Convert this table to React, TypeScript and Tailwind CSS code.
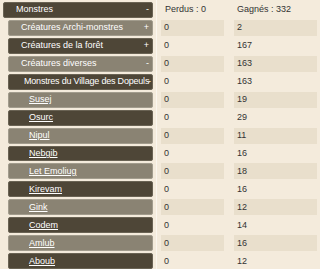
import React from "react"

type Row = {
  label: string
  level: 0 | 1 | 2 | 3
  sign?: string
  dark: boolean
  lost: string
  won: string
}

const rows: Row[] = [
  { label: "Créatures Archi-monstres", level: 1, sign: "+", dark: false, lost: "0", won: "2" },
  { label: "Créatures de la forêt", level: 1, sign: "+", dark: true, lost: "0", won: "167" },
  { label: "Créatures diverses", level: 1, sign: "-", dark: false, lost: "0", won: "163" },
  { label: "Monstres du Village des Dopeuls", level: 2, sign: "-", dark: true, lost: "0", won: "163" },
  { label: "Susej", level: 3, dark: false, lost: "0", won: "19" },
  { label: "Osurc", level: 3, dark: true, lost: "0", won: "29" },
  { label: "Nipul", level: 3, dark: false, lost: "0", won: "11" },
  { label: "Nebgib", level: 3, dark: true, lost: "0", won: "16" },
  { label: "Let Emoliug", level: 3, dark: false, lost: "0", won: "18" },
  { label: "Kirevam", level: 3, dark: true, lost: "0", won: "16" },
  { label: "Gink", level: 3, dark: false, lost: "0", won: "12" },
  { label: "Codem", level: 3, dark: true, lost: "0", won: "14" },
  { label: "Amlub", level: 3, dark: false, lost: "0", won: "16" },
  { label: "Aboub", level: 3, dark: true, lost: "0", won: "12" },
]

const indent = {
  0: "ml-[3px] pl-[12px] pr-[3px]",
  1: "ml-[8px] pl-[12px] pr-[3px]",
  2: "ml-[8px] pl-[15px] pr-[1px]",
  3: "ml-[8px] pl-[20px] pr-[3px]",
}

function Bar({ row }: { row: Row }) {
  return (
    <div
      className={`h-[16px] mr-[3px] flex items-center justify-between whitespace-nowrap overflow-hidden rounded-[2px] border text-white ${indent[row.level]} ${
        row.dark ? "bg-[#4e4637] border-[#6a6354]" : "bg-[#8a8373] border-[#a29c8d]"
      }`}
    >
      <span className={`min-w-0 ${row.level === 3 ? "underline" : ""} ${row.level === 2 ? "tracking-[-0.2px]" : ""}`}>
        {row.label}
      </span>
      {row.sign && <span className="shrink-0">{row.sign}</span>}
    </div>
  )
}

export default function App() {
  return (
    <div
      className="w-[320px] h-[269px] overflow-hidden flex bg-[#f4ebdc] text-[9px] leading-none"
      style={{ fontFamily: '"Liberation Sans", Arial, sans-serif' }}
    >
      <div className="w-[157px] flex flex-col gap-[2px] pt-[2px] border-r border-[#fbf6ee]">
        <Bar row={{ label: "Monstres", level: 0, sign: "-", dark: true, lost: "", won: "" }} />
        {rows.map(r => (
          <Bar key={r.label} row={r} />
        ))}
      </div>

      <div className="flex-1 flex flex-col gap-[2px] pt-[2px] pl-[4px] pr-[3px] text-[#333]">
        <div className="h-[16px] flex items-center">
          <span className="w-[73px] pl-[4px]">Perdus : 0</span>
          <span className="pl-[3px]">Gagnés : 332</span>
        </div>
        {rows.map((r, i) => (
          <div key={r.label} className="h-[16px] flex gap-[10px]">
            <div className={`w-[63px] flex items-center pl-[3px] ${i % 2 === 0 ? "bg-[#e9dfcc]" : ""}`}>
              {r.lost}
            </div>
            <div className={`flex-1 flex items-center pl-[3px] ${i % 2 === 0 ? "bg-[#e9dfcc]" : ""}`}>
              {r.won}
            </div>
          </div>
        ))}
      </div>
    </div>
  )
}
